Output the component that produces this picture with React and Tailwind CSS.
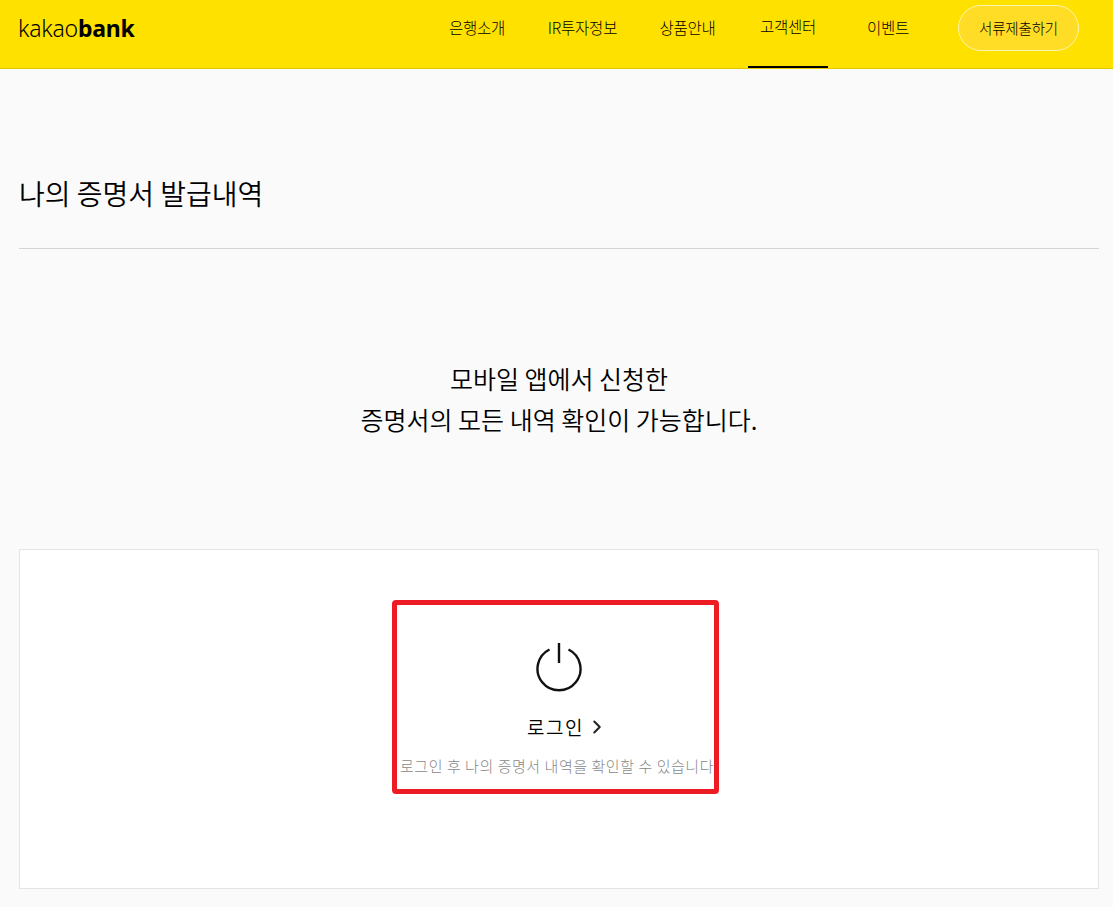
import { ChevronRight } from 'lucide-react';

const menus = [
  { label: '은행소개', w: 'w-[122px]' },
  { label: 'IR투자정보', w: 'w-[89px]' },
  { label: '상품안내', w: 'w-[121px]' },
  { label: '고객센터', w: 'w-[80px]', active: true },
  { label: '이벤트', w: 'w-[120px]' },
];

function PowerIcon() {
  return (
    <svg width="48" height="50" viewBox="0 0 48 50" fill="none" stroke="#111" strokeWidth="2.4">
      <path d="M14.5 7.5A21.5 21.5 0 1 0 33.5 7.5" />
      <path d="M24 1V21" />
    </svg>
  );
}

export default function App() {
  return (
    <div className="min-h-[907px] bg-[#fafafa] font-['Noto_Sans_CJK_KR',sans-serif] text-black">
      {/* Header */}
      <header className="flex h-[69px] items-center justify-between border-b border-[#e6c800] bg-[#ffe100] pl-[18px] pr-[34px]">
        <div className="mb-[11px] font-['Noto_Sans',sans-serif] text-[23px] leading-none tracking-[-0.2px]">
          <span className="font-light">kakao</span>
          <span className="font-bold">bank</span>
        </div>
        <div className="flex h-full items-start">
          <nav className="flex h-full">
            {menus.map((m) => (
              <a
                key={m.label}
                className={`flex h-[68px] items-center justify-center pb-[12px] text-[15.5px] font-light tracking-[-0.2px] text-black ${m.w} ${m.active ? 'border-b-2 border-black' : ''}`}
              >
                {m.label}
              </a>
            ))}
          </nav>
          <button className="ml-[10px] mt-[5px] h-[46px] w-[121px] rounded-full border border-[#fff6b0] bg-[#ffdc26] text-[14.5px] font-light tracking-[-0.2px] text-black">
            서류제출하기
          </button>
        </div>
      </header>

      <main className="pb-[19px] pl-[19px] pr-[14px]">
        <h1 className="border-b border-[#d5d5d5] pb-[34px] pt-[103px] text-[28px] font-[350] leading-[42px] text-black">
          나의 증명서 발급내역
        </h1>

        <p className="pt-[109px] text-center text-[25px] font-[350] leading-[41px] text-black">
          모바일 앱에서 신청한
          <br />
          증명서의 모든 내역 확인이 가능합니다.
        </p>

        {/* Login card */}
        <section className="mt-[109px] flex h-[340px] justify-center border border-[#e5e5e5] bg-white pt-[50px]">
          <div className="ml-[-7px] flex h-[194px] w-[327px] flex-col items-center rounded-[4px] border-[5px] border-[#ed1c24] pl-[7px] pt-[37px]">
            <PowerIcon />
            <div className="ml-[17px] mt-[22px] flex items-center text-[19px] font-[350] leading-[26px] tracking-[1.5px]">
              로그인
              <ChevronRight size={22} strokeWidth={2.2} className="ml-[2px] text-[#222]" />
            </div>
            <p className="mr-[4px] mt-[16px] whitespace-nowrap text-[15px] font-light leading-[20px] tracking-[0.55px] text-[#888]">
              로그인 후 나의 증명서 내역을 확인할 수 있습니다
            </p>
          </div>
        </section>
      </main>
    </div>
  );
}
